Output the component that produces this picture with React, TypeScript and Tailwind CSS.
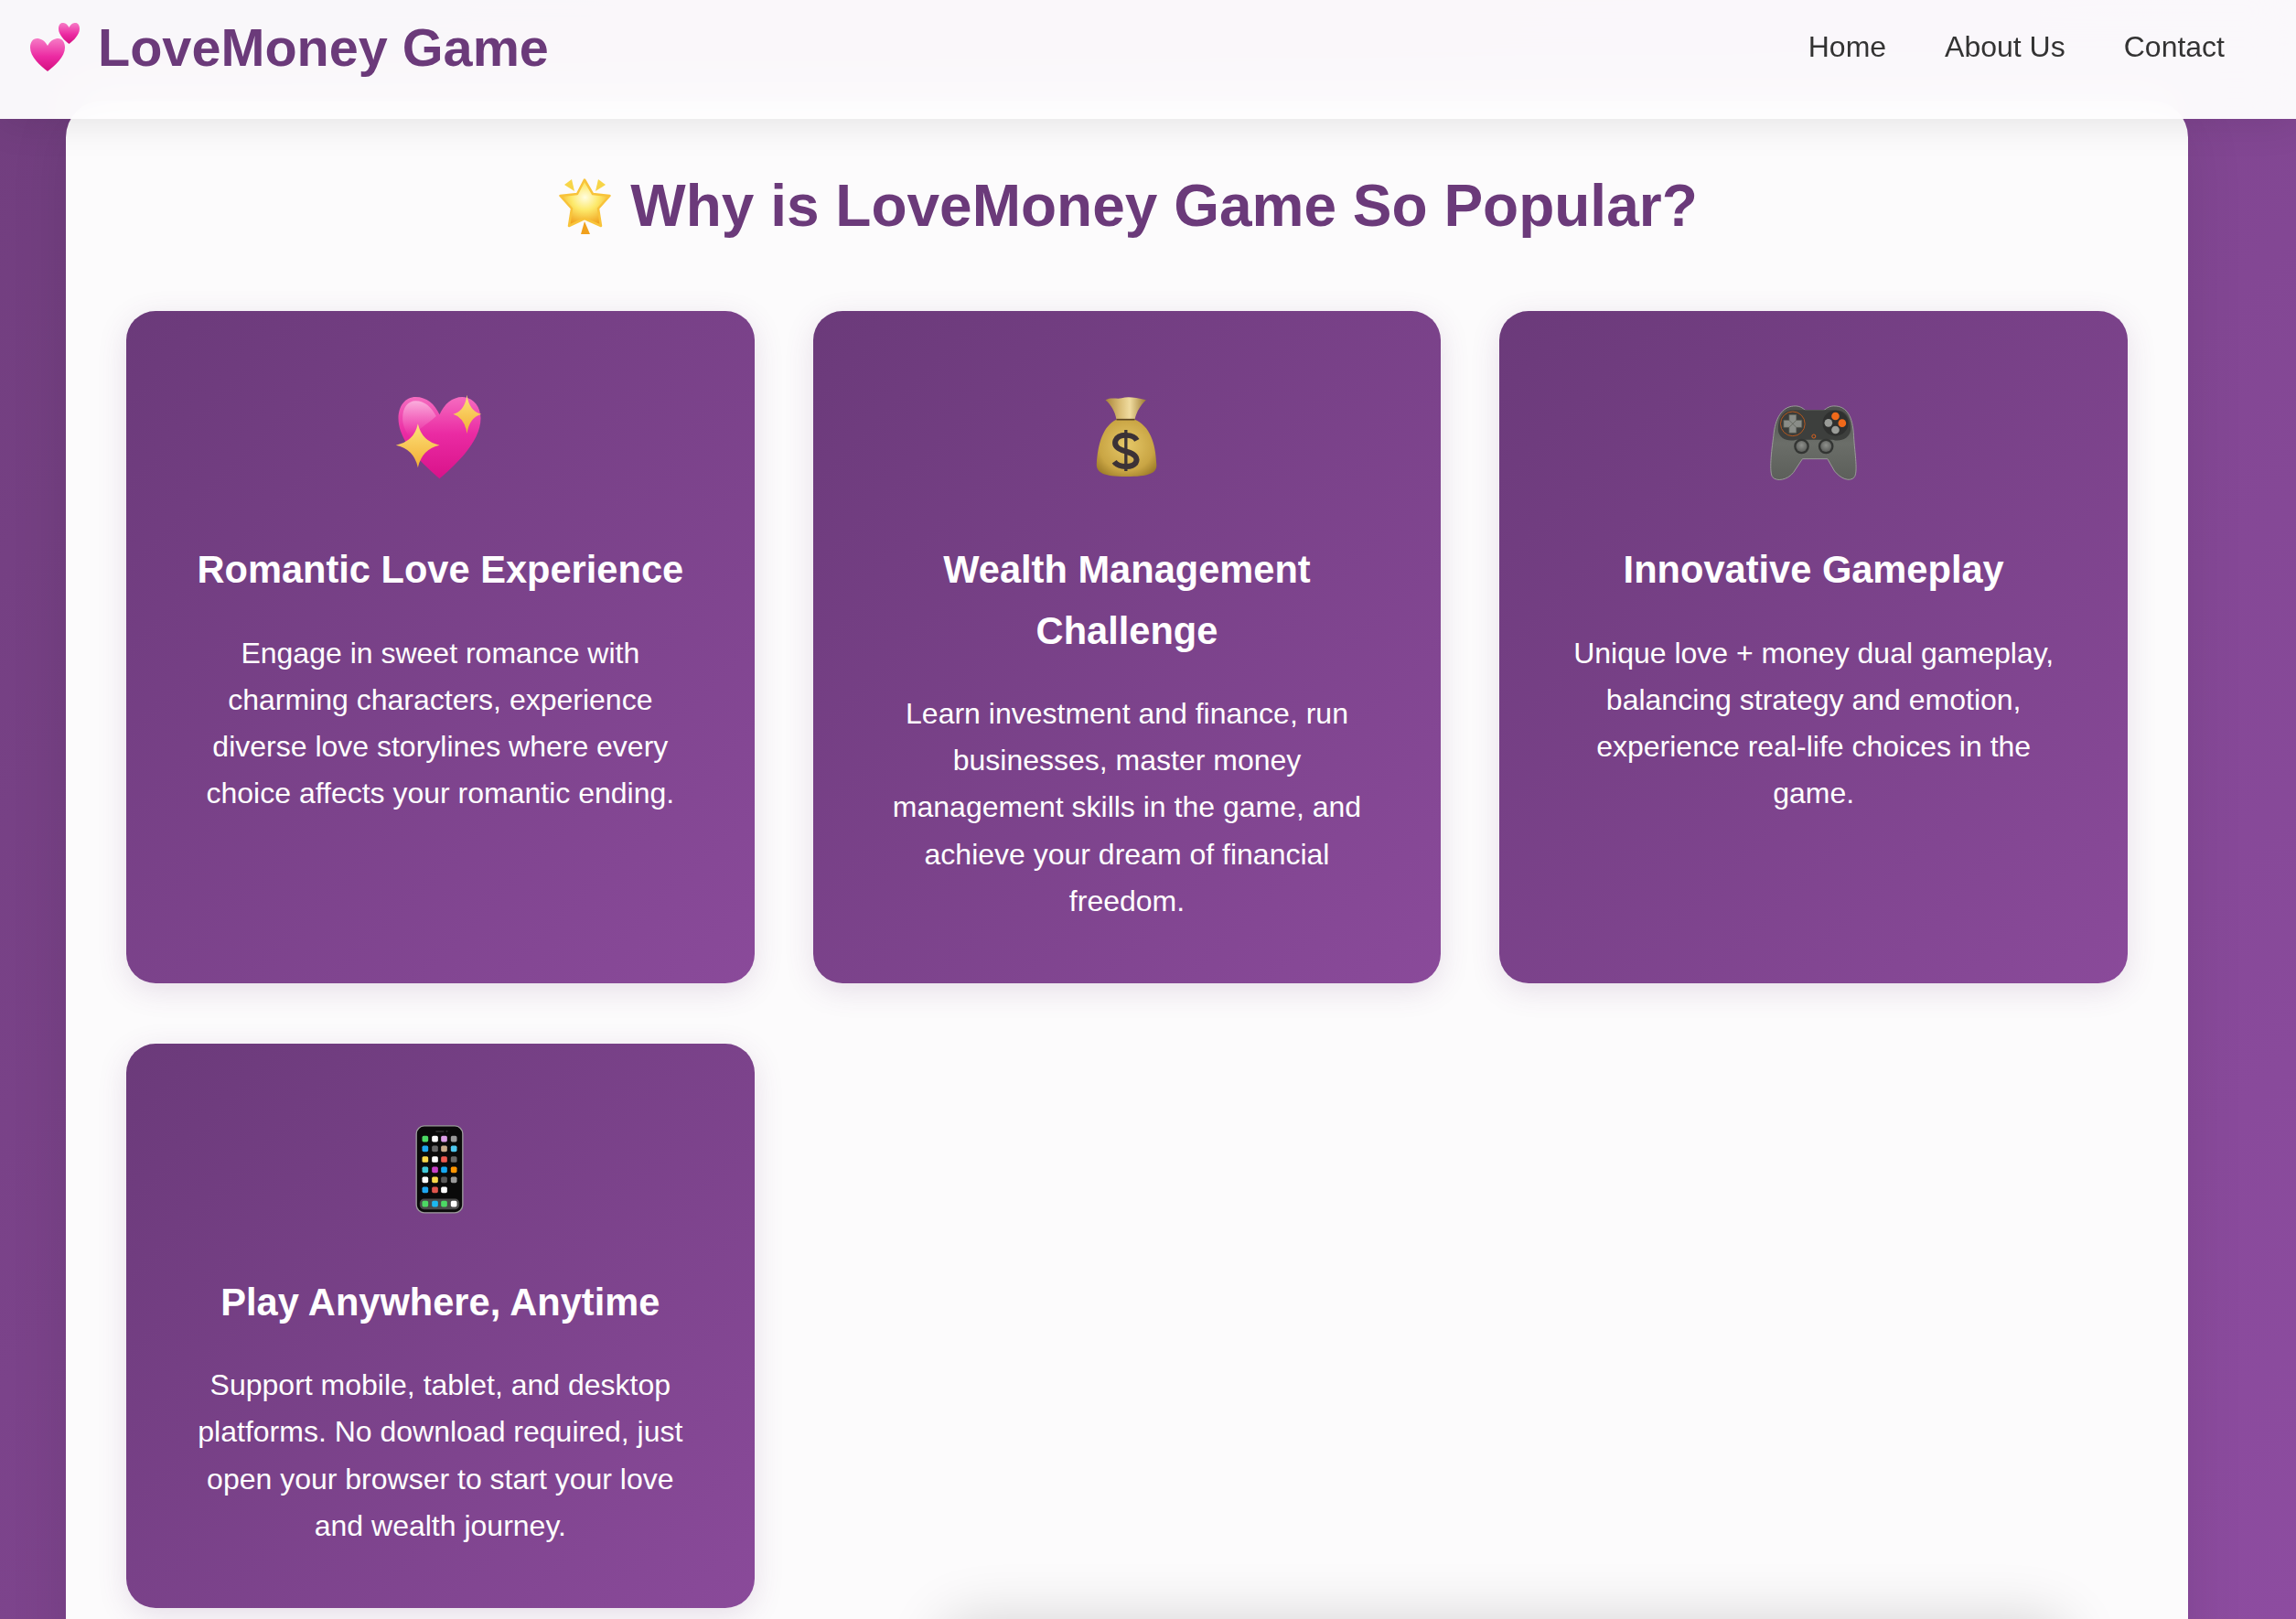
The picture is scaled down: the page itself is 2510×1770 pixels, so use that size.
const font = { fontFamily: '"Liberation Sans", Arial, sans-serif' };

function TwoHearts() {
  const heart = 'M19 8 C16 2 11 0 7.5 0 C3 0 0 4 0 10 C0 20 11 30 19 36 C27 30 38 20 38 10 C38 4 35 0 30.5 0 C27 0 22 2 19 8Z';
  return (
    <svg width="55" height="53" viewBox="0 0 55 53" className="shrink-0">
      <defs>
        <linearGradient id="th" x1="0" y1="0" x2="0" y2="1">
          <stop offset="0" stopColor="#f67cc6" />
          <stop offset="0.55" stopColor="#ec2aa2" />
          <stop offset="1" stopColor="#d40f80" />
        </linearGradient>
      </defs>
      <path d={heart} fill="url(#th)" transform="translate(0 17)" />
      <path d={heart} fill="url(#th)" transform="translate(31 0) scale(0.605 0.64)" />
    </svg>
  );
}

function GlowingStar() {
  return (
    <svg width="57" height="61" viewBox="0 0 57 61" className="shrink-0">
      <defs>
        <radialGradient id="gs" cx="0.5" cy="0.38" r="0.62">
          <stop offset="0" stopColor="#fffde0" />
          <stop offset="0.45" stopColor="#fde96a" />
          <stop offset="1" stopColor="#f0a01c" />
        </radialGradient>
      </defs>
      <path d="M28 1.5 L37 17 L55.5 19 L43 33 L46 52 L28 44 L11 52 L14 33 L1.5 19 L20 17Z" fill="url(#gs)" stroke="#f8c33a" strokeWidth="2.5" strokeLinejoin="round" />
      <path d="M6 7 L14 1 L17 14Z" fill="#f7d548" />
      <path d="M40 14 L43 1 L51 7Z" fill="#f7d548" />
      <path d="M28 47 L34 61 L24 61Z" fill="#f0a01c" />
    </svg>
  );
}

function SparklingHeart() {
  return (
    <svg width="120" height="120" viewBox="64.5 33 360 360">
      <defs>
        <linearGradient id="sh" x1="0" y1="0" x2="0" y2="1">
          <stop offset="0" stopColor="#f56cc0" />
          <stop offset="0.45" stopColor="#ea2ba3" />
          <stop offset="1" stopColor="#d9128a" />
        </linearGradient>
        <linearGradient id="sp" x1="0" y1="0" x2="0" y2="1">
          <stop offset="0" stopColor="#fde27a" />
          <stop offset="1" stopColor="#f2ae35" />
        </linearGradient>
        <linearGradient id="shl" x1="0" y1="0" x2="0" y2="1">
          <stop offset="0" stopColor="#fbb5e0" stopOpacity="0.9" />
          <stop offset="1" stopColor="#f56cc0" stopOpacity="0" />
        </linearGradient>
      </defs>
      <path d="M243 130 C228 95 200 72 165 72 C130 72 108 102 108 142 C108 215 180 285 243 340 C306 285 378 215 378 142 C378 102 352 72 318 72 C285 72 258 95 243 130Z" fill="url(#sh)" />
      <path d="M232 135 C215 105 195 85 165 85 C138 85 122 108 122 142 C122 165 130 182 145 205 C170 180 205 160 232 135Z" fill="url(#shl)" />
      <path d="M172 160 Q185 218 243 230 Q185 243 172 304 Q160 243 100 230 Q160 218 172 160Z" fill="url(#sp)" />
      <path d="M333 65 Q340 118 380 128 Q340 140 333 192 Q326 140 288 128 Q326 118 333 65Z" fill="url(#sp)" />
    </svg>
  );
}

function MoneyBag() {
  return (
    <svg width="120" height="120" viewBox="37.5 33 360 360">
      <defs>
        <radialGradient id="mb" cx="0.5" cy="0.45" r="0.65">
          <stop offset="0" stopColor="#e6c868" />
          <stop offset="0.7" stopColor="#c9a544" />
          <stop offset="1" stopColor="#9c7b28" />
        </radialGradient>
        <linearGradient id="mn" x1="0" y1="0" x2="1" y2="0">
          <stop offset="0" stopColor="#a88338" />
          <stop offset="0.35" stopColor="#d9bc74" />
          <stop offset="0.6" stopColor="#f0dca0" />
          <stop offset="1" stopColor="#9d7a30" />
        </linearGradient>
      </defs>
      <path d="M147 82 C165 72 185 80 200 76 C220 70 245 74 280 82 C262 100 250 118 243 146 L183 146 C178 118 165 98 147 82Z" fill="url(#mn)" />
      <path d="M183 146 C140 165 122 225 118 290 C116 318 135 333 215 333 C295 333 318 320 314 290 C312 225 292 165 243 146Z" fill="url(#mb)" />
      <path d="M183 146 L243 146" stroke="#5d4520" strokeWidth="5" />
      <path d="M250 214 C240 194 190 190 180 215 C172 240 205 248 218 252 C240 258 256 270 246 288 C234 306 190 304 176 284" fill="none" stroke="#3b3236" strokeWidth="18" />
      <path d="M214 180 L214 315" stroke="#3b3236" strokeWidth="10" />
    </svg>
  );
}

function GameController() {
  return (
    <svg width="120" height="120" viewBox="37.5 3 360 360">
      <defs>
        <linearGradient id="gc" x1="0" y1="0" x2="0" y2="1">
          <stop offset="0" stopColor="#4d4f4c" />
          <stop offset="0.5" stopColor="#6b6e69" />
          <stop offset="1" stopColor="#5c5f5a" />
        </linearGradient>
        <radialGradient id="st" cx="0.5" cy="0.4" r="0.6">
          <stop offset="0" stopColor="#8f918d" />
          <stop offset="1" stopColor="#5c5e5b" />
        </radialGradient>
      </defs>
      <path d="M150 72 C170 70 180 78 190 86 L250 86 C260 78 270 70 290 72 C325 75 345 105 348 170 C352 230 362 288 350 305 C335 322 305 310 285 285 L262 245 L180 245 L150 290 C130 315 95 320 82 305 C70 290 78 220 85 170 C90 112 112 75 150 72Z" fill="url(#gc)" stroke="#9a9c98" strokeWidth="3" />
      <path d="M100 150 C100 105 120 85 150 85 L290 85 C320 85 340 110 338 150 C335 180 300 190 280 182 L160 182 C135 190 102 180 100 150Z" fill="#3d3f3d" />
      <circle cx="148" cy="130" r="40" fill="#3a3c3a" stroke="#b5581f" strokeWidth="3" />
      <path d="M136 100 H160 V118 H178 V142 H160 V160 H136 V142 H118 V118 H136Z" fill="#8a8d88" stroke="#55574f" strokeWidth="2" strokeLinejoin="round" />
      <path d="M136 118 L160 142 M160 118 L136 142" stroke="#55574f" strokeWidth="2" />
      <circle cx="288" cy="128" r="42" fill="#2f302f" />
      <circle cx="288" cy="105" r="13" fill="#f0691a" />
      <circle cx="310" cy="128" r="13" fill="#f0691a" />
      <circle cx="265" cy="127" r="13" fill="#9a9c98" />
      <circle cx="288" cy="150" r="13" fill="#9a9c98" />
      <circle cx="217" cy="171" r="6" fill="none" stroke="#d9621e" strokeWidth="3" />
      <circle cx="177" cy="204" r="25" fill="#333533" />
      <circle cx="177" cy="204" r="18" fill="url(#st)" />
      <circle cx="257" cy="204" r="25" fill="#333533" />
      <circle cx="257" cy="204" r="18" fill="url(#st)" />
    </svg>
  );
}

const phoneRows = [
  ['#4cd964', '#ffffff', '#dda0e8', '#9a9a9a'],
  ['#1ea7f0', '#666666', '#c9ab8a', '#4fc8f0'],
  ['#f8d84a', '#ffffff', '#ee5a50', '#6a6a6a'],
  ['#40c8d8', '#c63fc6', '#16a8f0', '#ff9500'],
  ['#ffffff', '#f8d84a', '#5a5a5a', '#9a9a9a'],
  ['#1ea7f0', '#e0554c', '#ffffff'],
];
const phoneX = [136, 168, 198, 230];
const phoneY = [102, 134, 169, 203, 236, 269];
const dock = ['#4cd964', '#1cb8f0', '#4cd964', '#ffffff'];

function MobilePhone() {
  return (
    <svg width="120" height="120" viewBox="4.5 32.4 360 360">
      <rect x="107" y="59" width="152" height="285" rx="26" fill="#0a0a0a" stroke="#9c9c9c" strokeWidth="4" />
      <rect x="170" y="75" width="28" height="5" rx="2.5" fill="#333333" />
      <circle cx="207" cy="77" r="3" fill="#333333" />
      {phoneRows.map((row, r) =>
        row.map((c, i) => <rect key={`${r}-${i}`} x={phoneX[i] - 10} y={phoneY[r] - 10} width="20" height="20" rx="5" fill={c} />)
      )}
      <rect x="118" y="298" width="130" height="35" rx="14" fill="#4a4a4a" />
      {dock.map((c, i) => <rect key={i} x={phoneX[i] - 10} y="305" width="20" height="20" rx="5" fill={c} />)}
    </svg>
  );
}

const features = [
  {
    icon: <SparklingHeart />,
    title: 'Romantic Love Experience',
    text: 'Engage in sweet romance with charming characters, experience diverse love storylines where every choice affects your romantic ending.',
  },
  {
    icon: <MoneyBag />,
    title: 'Wealth Management Challenge',
    text: 'Learn investment and finance, run businesses, master money management skills in the game, and achieve your dream of financial freedom.',
  },
  {
    icon: <GameController />,
    title: 'Innovative Gameplay',
    text: 'Unique love + money dual gameplay, balancing strategy and emotion, experience real-life choices in the game.',
  },
  {
    icon: <MobilePhone />,
    title: 'Play Anywhere, Anytime',
    text: 'Support mobile, tablet, and desktop platforms. No download required, just open your browser to start your love and wealth journey.',
  },
];

export default function App() {
  return (
    <div style={font} className="relative h-[1770px] overflow-hidden bg-[linear-gradient(135deg,#713e7e,#8d4ca0)]">
      <header className="relative z-10 flex h-[130px] items-center justify-between bg-white/[0.96] pb-[26px] pl-[33px] pr-[78px] shadow-[0_4px_40px_rgba(0,0,0,0.1)] backdrop-blur-xl">
        <div className="flex items-center gap-[19px]">
          <TwoHearts />
          <span className="text-[57.6px] font-bold leading-[1.6] text-[#6b3a7a]">LoveMoney Game</span>
        </div>
        <nav className="flex gap-[64px] text-[32px] leading-[1.6] text-[#333333]">
          <a>Home</a>
          <a>About Us</a>
          <a>Contact</a>
        </nav>
      </header>

      <main className="ml-[72px] -mt-[20px] w-[2320px] rounded-[40px] bg-[#fcfbfc] px-[66px] py-[64px] shadow-[0_16px_64px_rgba(0,0,0,0.1)]">
        <h2 className="mb-[64px] flex items-center justify-center gap-[21px] pl-[3px] text-[64px] font-bold leading-[1.6] text-[#6b3a7a]">
          <GlowingStar />
          Why is LoveMoney Game So Popular?
        </h2>
        <div className="grid grid-cols-3 gap-x-[64px] gap-y-[66px]">
          {features.map(f => (
            <div key={f.title} className="rounded-[32px] bg-[linear-gradient(135deg,#6b3a7a,#8a4a9a)] p-[64px] text-center text-white shadow-[0_8px_32px_rgba(107,58,122,0.15)]">
              <div className="flex h-[153.6px] items-center justify-center">{f.icon}</div>
              <h3 className="mt-[32px] text-[41.6px] font-bold leading-[1.6]">{f.title}</h3>
              <p className="mt-[32px] text-[32px] leading-[1.6]">{f.text}</p>
            </div>
          ))}
        </div>
      </main>

      {/* shadow of the bar sitting just under the fold */}
      <div className="absolute left-[1030px] top-[1770px] h-[80px] w-[1230px] rounded-[32px] bg-white shadow-[0_0_64px_rgba(0,0,0,0.16)]" />
    </div>
  );
}
